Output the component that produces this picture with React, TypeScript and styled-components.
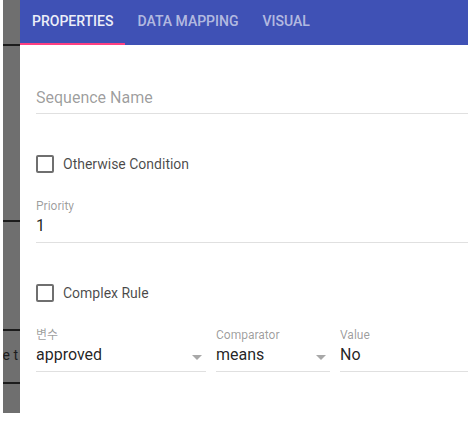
import React from "react";
import styled, { createGlobalStyle } from "styled-components";

const Global = createGlobalStyle`
  html, body { margin: 0; padding: 0; background: #ffffff; }
  body { font-family: Roboto, "Noto Sans CJK KR", sans-serif; }
`;

const Stage = styled.div`
  width: 471px;
  height: 421px;
  display: flex;
  background: #ffffff;
  overflow: hidden;
`;

const Gutter = styled.div`
  width: 3px;
  flex: none;
`;

const Backdrop = styled.div`
  width: 17px;
  height: 413px;
  flex: none;
  background: #6f6f6f;
  display: flex;
  flex-direction: column;
  overflow: hidden;
`;

const BackSeg = styled.div<{ $h: number }>`
  height: ${(p) => p.$h}px;
  flex: none;
  border-bottom: 2px solid #1c1c1c;
  box-sizing: border-box;
`;

const BackText = styled.div`
  height: 53px;
  flex: none;
  border-bottom: 2px solid #1c1c1c;
  box-sizing: border-box;
  font-family: Roboto, sans-serif;
  font-size: 14px;
  color: #1e1e1e;
  white-space: nowrap;
  margin-left: -5px;
  padding-top: 16px;
  line-height: 16px;
`;

const Panel = styled.div`
  width: 448px;
  flex: none;
  display: flex;
  flex-direction: column;
  background: #ffffff;
`;

const Header = styled.div`
  height: 45px;
  background: #3f51b5;
  display: flex;
  flex: none;
`;

const Tab = styled.div<{ $active?: boolean }>`
  position: relative;
  padding: 0 12px 3px;
  display: flex;
  align-items: center;
  font-family: Roboto, sans-serif;
  font-weight: 500;
  font-size: 14px;
  letter-spacing: 0;
  color: ${(p) => (p.$active ? "#eceef8" : "rgba(255,255,255,0.62)")};
  &::after {
    content: "";
    position: absolute;
    left: 0;
    right: 0;
    bottom: 0;
    height: 2px;
    background: ${(p) => (p.$active ? "#ff4081" : "transparent")};
  }
`;

const Content = styled.div`
  padding-left: 16px;
  display: flex;
  flex-direction: column;
`;

const Field = styled.div<{ $mt: number }>`
  margin-top: ${(p) => p.$mt}px;
  display: flex;
  flex-direction: column;
  position: relative;
  min-width: 0;
`;

const Label = styled.div`
  font-size: 12px;
  line-height: 14px;
  color: rgba(0, 0, 0, 0.4);
  margin-bottom: 3px;
`;

const Input = styled.div<{ $placeholder?: boolean; $pb?: number }>`
  font-size: 16px;
  line-height: 20px;
  padding-bottom: ${(p) => p.$pb ?? 5}px;
  border-bottom: 1px solid #e0e0e0;
  color: ${(p) => (p.$placeholder ? "rgba(0,0,0,0.4)" : "rgba(0,0,0,0.87)")};
  white-space: nowrap;
`;

const Arrow = styled.span`
  position: absolute;
  right: 4px;
  bottom: 12px;
  width: 0;
  height: 0;
  border-left: 5px solid transparent;
  border-right: 5px solid transparent;
  border-top: 5px solid #a8a8a8;
`;

const CheckRow = styled.div<{ $mt: number }>`
  margin-top: ${(p) => p.$mt}px;
  display: flex;
  align-items: center;
  gap: 9px;
  height: 18px;
`;

const Box = styled.span`
  width: 18px;
  height: 18px;
  box-sizing: border-box;
  border: 2px solid #6f6f6f;
  border-radius: 2px;
  flex: none;
`;

const CheckLabel = styled.span`
  font-size: 14px;
  line-height: 18px;
  color: rgba(0, 0, 0, 0.72);
`;

const RuleRow = styled.div`
  margin-top: 26px;
  display: grid;
  grid-template-columns: 170px 114px 1fr;
  column-gap: 10px;
`;

export default function App() {
  return (
    <>
      <Global />
      <Stage>
        <Gutter />
        <Backdrop>
          <BackSeg $h={46} />
          <BackSeg $h={176} />
          <BackSeg $h={109} />
          <BackText>re t</BackText>
        </Backdrop>
        <Panel>
          <Header>
            <Tab $active>PROPERTIES</Tab>
            <Tab>DATA MAPPING</Tab>
            <Tab>VISUAL</Tab>
          </Header>
          <Content>
            <Field $mt={43}>
              <Input $placeholder>Sequence Name</Input>
            </Field>
            <CheckRow $mt={41}>
              <Box />
              <CheckLabel>Otherwise Condition</CheckLabel>
            </CheckRow>
            <Field $mt={26}>
              <Label>Priority</Label>
              <Input $pb={6}>1</Input>
            </Field>
            <CheckRow $mt={41}>
              <Box />
              <CheckLabel>Complex Rule</CheckLabel>
            </CheckRow>
            <RuleRow>
              <Field $mt={0}>
                <Label>변수</Label>
                <Input $pb={6}>approved</Input>
                <Arrow />
              </Field>
              <Field $mt={0}>
                <Label>Comparator</Label>
                <Input $pb={6}>means</Input>
                <Arrow />
              </Field>
              <Field $mt={0}>
                <Label>Value</Label>
                <Input $pb={6}>No</Input>
              </Field>
            </RuleRow>
          </Content>
        </Panel>
      </Stage>
    </>
  );
}
